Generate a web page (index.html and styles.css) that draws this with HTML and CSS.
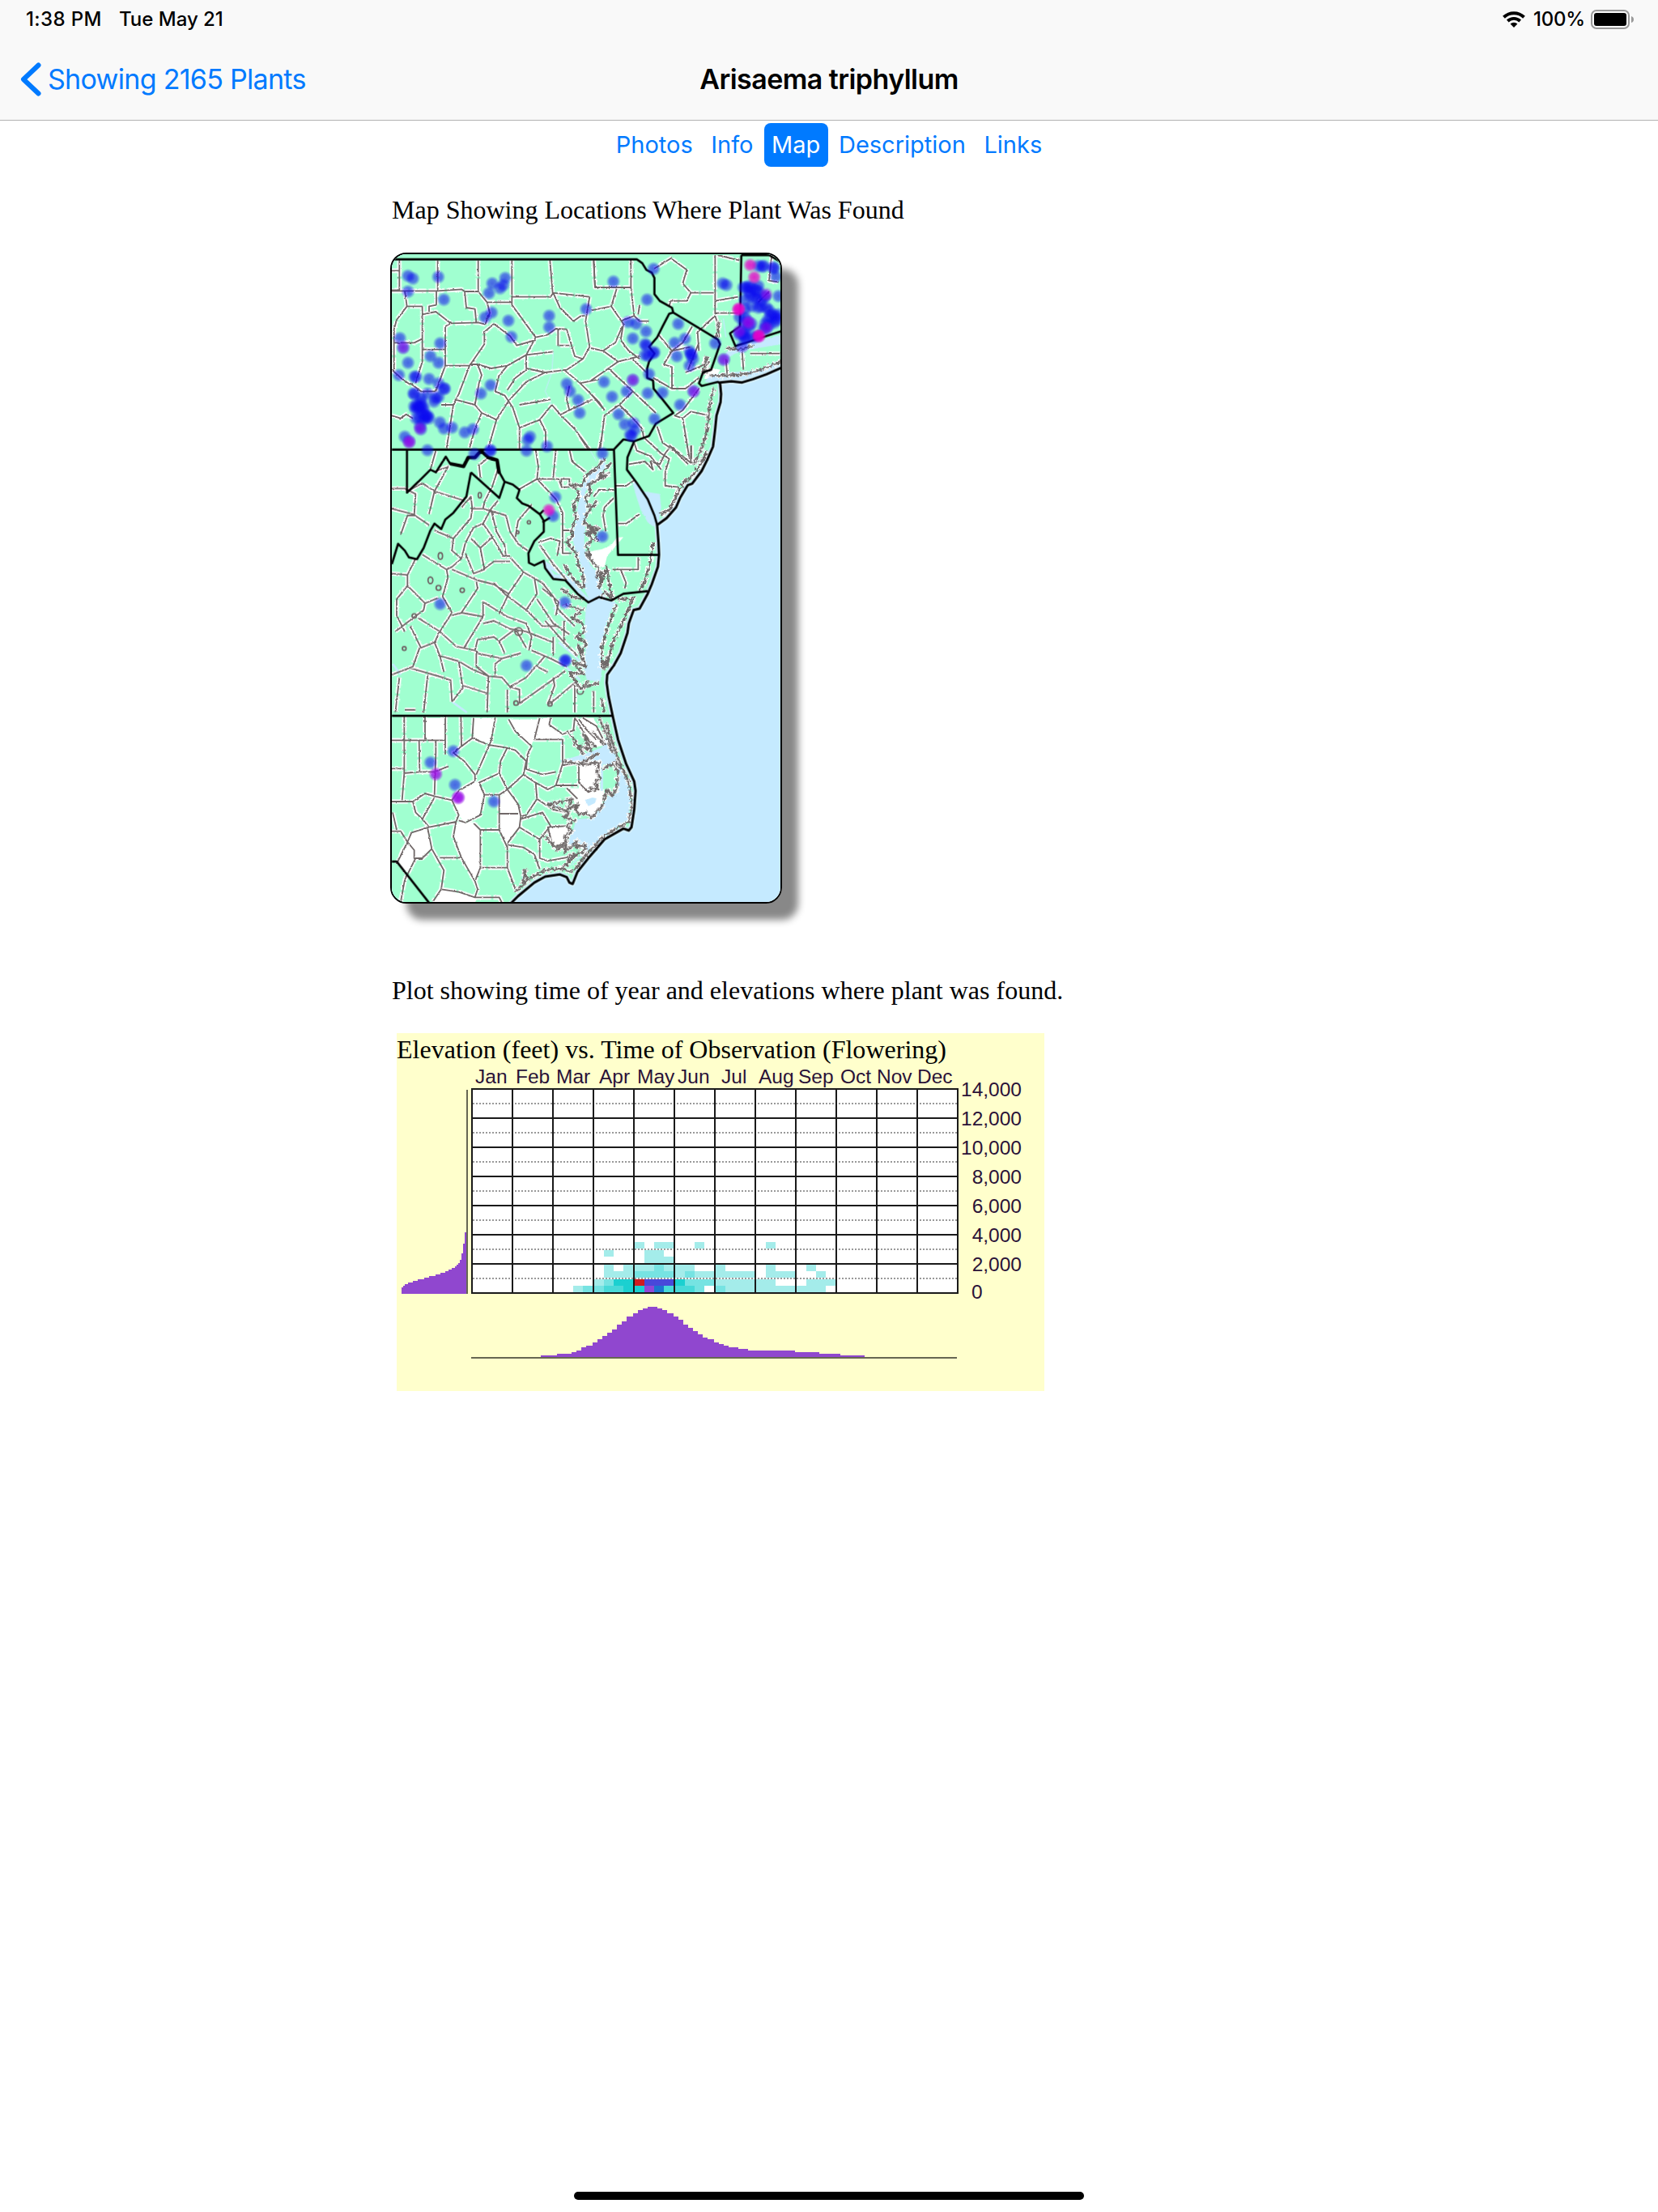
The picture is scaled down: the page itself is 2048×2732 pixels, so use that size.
FILE: index.html
```html
<!DOCTYPE html>
<html lang="en">
<head>
  <meta charset="UTF-8" />
  <meta name="viewport" content="width=device-width, initial-scale=1.0"/>
  <title>Arisaema triphyllum</title>
  <link rel="stylesheet" href="styles.css">
</head>
<body>
  <header>
    <div class="status-bar">
      <span class="time">1:38 PM</span>
      <span class="date">Tue May 21</span>
      <svg class="wifi" viewBox="0 0 28 20">
        <path d="M1.5 7.2A18 18 0 0 1 26.5 7.2" stroke-width="4"/>
        <path d="M6.3 12A11.2 11.2 0 0 1 21.7 12" stroke-width="3.8"/>
        <path class="tip" d="M14 20L9.6 15.6A6.4 6.4 0 0 1 18.4 15.6Z"/>
      </svg>
      <span class="percent">100%</span>
      <svg class="battery" viewBox="0 0 54 24">
        <rect x="1" y="1" width="46" height="22" rx="6" fill="none" stroke="#999" stroke-width="2"/>
        <rect x="4" y="4" width="40" height="16" rx="3"/>
        <path d="M50 8Q53 9 53 12T50 16Z" fill="#999"/>
      </svg>
    </div>
    <nav class="nav-bar">
      <a class="back" href="#">
        <svg viewBox="0 0 26 42"><path d="M22.5 3.5L4 21L22.5 38.5"/></svg>
        <span>Showing 2165 Plants</span>
      </a>
      <h1>Arisaema triphyllum</h1>
    </nav>
  </header>

  <div class="tabs">
    <a href="#">Photos</a>
    <a href="#">Info</a>
    <a href="#" class="active">Map</a>
    <a href="#">Description</a>
    <a href="#">Links</a>
  </div>

  <main>
    <p class="map-title">Map Showing Locations Where Plant Was Found</p>

    <svg class="map" viewBox="42 42 1440 2400">
      <defs>
        <filter id="rough" x="0" y="0" width="100%" height="100%">
          <feTurbulence type="fractalNoise" baseFrequency="0.09" numOctaves="2" seed="4"/>
          <feDisplacementMap in="SourceGraphic" scale="7" xChannelSelector="R" yChannelSelector="G"/>
        </filter>
        <filter id="rougher" x="-10%" y="-10%" width="120%" height="120%">
          <feTurbulence type="fractalNoise" baseFrequency="0.1" numOctaves="2" seed="9"/>
          <feDisplacementMap in="SourceGraphic" scale="20" xChannelSelector="R" yChannelSelector="G"/>
        </filter>
        <radialGradient id="blue">
          <stop offset="0" stop-color="#0a00f0" stop-opacity=".6"/>
          <stop offset=".55" stop-color="#0a0af0" stop-opacity=".52"/>
          <stop offset="1" stop-color="#0a0af0" stop-opacity="0"/>
        </radialGradient>
        <radialGradient id="purple">
          <stop offset="0" stop-color="#9a00e8" stop-opacity=".6"/>
          <stop offset=".55" stop-color="#9a10e8" stop-opacity=".5"/>
          <stop offset="1" stop-color="#9a20e8" stop-opacity="0"/>
        </radialGradient>
        <radialGradient id="pink">
          <stop offset="0" stop-color="#e800c8" stop-opacity=".85"/>
          <stop offset=".55" stop-color="#e800c8" stop-opacity=".7"/>
          <stop offset="1" stop-color="#e800c8" stop-opacity="0"/>
        </radialGradient>

        <path id="coast" d="M1500 456L1430 487L1380 505L1340 517L1300 513L1258 517L1262 560L1260 590L1245 640L1240 690L1232 755L1210 805L1190 845L1155 892L1138 898L1110 945L1095 980L1060 1020L1025 1045L1030 1110L1032 1155L1028 1200L1005 1265L990 1300L960 1355L938 1360L920 1410L915 1445L890 1520L865 1565L840 1600L838 1630L845 1680L862 1760L880 1840L910 1930L940 1995L945 2030L940 2100L930 2165L920 2177L900 2170L830 2210L770 2280L730 2330L712 2375L700 2370L690 2350L665 2340L610 2348L570 2370L510 2420L480 2450"/>

        <g id="counties">
          <!-- west and central Pennsylvania -->
          <path d="M70 65V175H42M42 103H70M212 65V180M362 65V180L395 220H487M487 65V230M487 200H630L640 185M628 65L638 185L775 200M790 65L795 165H928M42 178H210L300 172L312 180H362M207 180V230M90 178L98 235H155M98 235L60 285L50 320V470M155 235V440L130 520M155 265L205 255L260 298L362 295L388 302M312 180L318 240L350 245L355 295M180 255V235L207 230M155 395H240M260 298L240 310V455H330M50 370H125L155 355M42 470L75 500L110 525M240 455L205 550H150L110 520M330 455L385 375V330L420 300M330 455L290 560L270 600L245 760M420 300L480 345L505 380L575 360M395 220L405 260L388 302M487 230L575 350L620 340L650 318L690 320M575 350L540 415L470 455L410 465L360 450H330M540 415L640 403M540 415V465L610 480M360 450L375 490L365 520L350 600L275 580M470 455L440 490L425 550L460 565L490 610M540 470L500 500L470 545M610 480L540 515L475 585L430 655L400 760M610 480L690 470L750 430M690 320L720 420L750 430L775 385L760 290L775 200M658 320V380H700M640 185L665 240L715 290L740 272L755 270M350 600L375 630L350 690L330 760M375 630L430 655M490 610L515 685V765M515 685L590 655L635 600M515 600L630 580M590 655L612 700V765M635 600L670 640L720 690L775 765M680 470L740 520L810 590L830 620M740 520L810 505M670 635L700 620L785 580M700 530L690 580L700 620M225 600H270M42 640L75 650L95 635L120 650"/>
          <!-- east Pennsylvania, New Jersey, New York -->
          <path transform="translate(780 0)" d="M10 65L15 165M148 60V165L160 270M95 170L75 235L0 250M75 235L120 300L90 370L45 400L0 390M160 270L110 290M175 265L180 230M160 270L180 290H215M120 300L110 360L140 400L180 430M45 400L100 440L180 420M100 440L65 465L0 510M65 465L155 550L240 630M155 430L205 480M155 550L105 600L50 640L35 760M0 560L50 620M105 600L165 660L190 690L195 720M300 55L235 95M300 60L355 100L340 150L370 185H455M370 185L355 215H295L290 235M460 45V260H545M460 215L545 200M460 270L395 330L400 400M460 270L470 300L475 350M375 310L340 370L300 400M400 370L360 470M250 340L300 400L270 450L300 460V540H350L400 500M300 400L370 385M350 480L400 460L440 440M230 500L300 540M400 540L340 620L310 640L340 650L365 800M340 650L370 625L440 640M245 680L265 740L310 770L360 820M160 740L170 770L220 790L260 840M670 45L660 140L695 145M560 400L565 470M500 430L505 490M660 180L620 220M470 45L550 65M425 430L435 445L420 460M590 410H700M372 750V800"/>
          <!-- south New Jersey, Maryland, Delaware -->
          <path transform="translate(510 720)" d="M410 100L470 90L500 120L490 90L525 100L545 60L560 40M470 5L530 60L560 80L545 130V180L595 185M560 30L640 95L700 80M640 30V95M595 185L570 260L530 290M360 180H400L430 160M370 320H400L450 285M340 130L300 155L270 165M280 220L300 195H355M355 225L320 260L315 290L325 350M445 445V490H350M380 490L400 540L395 560M140 45L130 150M190 45L200 90L250 130M65 45L75 110L70 155L0 195M70 155H150L160 180M70 155L140 230L165 280V430H200M165 345H200M75 390L120 375L155 385L145 440M230 0L260 45M310 0L300 45M160 155H190V185H160Z"/>
          <!-- Virginia -->
          <path transform="translate(0 720)" d="M205 50L185 120M205 125L250 110L200 200L155 170M200 200L180 285M200 200L310 235M42 190H90L130 210L125 290H100L75 360M42 265L120 285L180 325M155 170L100 200M365 100L370 150M370 100L400 75M435 120L415 180L385 240L380 265H340L335 220L300 260M340 265L335 300L300 340L270 375L265 420L300 450M200 345L270 375M435 235L410 265L380 320L345 335L315 390L300 450M380 320L415 370L370 410L335 375M380 265L465 290M410 270L430 350L460 400L465 445M465 290L480 350L510 395L545 420M370 410L385 490L345 505L315 430M415 370L455 440H480M480 460H420L380 490M155 435L245 490L250 520M245 490L265 480L300 450M265 490L360 530L420 545L475 580L530 500L480 445M250 520L230 590L265 650M100 550V510L42 505M130 450L100 510M100 550L165 615L160 640L55 720M100 550L60 600V660L90 720M165 615L215 595M265 650L220 720L140 670M265 660L300 650L360 560L355 535M300 650L380 665V610L470 665L540 690M475 580L440 655M420 540L460 580L540 640L600 700H660M220 720L280 775L350 790L360 750L420 740L440 755M380 665L310 780M380 690L420 680L480 710L540 720L640 760M540 640L580 580L570 520M530 500L600 540L640 590L660 640L720 700M220 720L200 760L150 780L110 700M200 760L220 810L290 830L340 860L400 885M145 780L120 850L42 880M110 855L230 890L260 900L265 980M290 830L305 930L265 980M220 810L235 870M70 890L55 1020M175 880L160 1020M305 920L400 950M355 790V850L400 885L450 890L480 925M400 885L395 1020M355 800L450 820L520 800M450 820L425 840V880M440 755L460 800M440 755L500 710L540 780M480 925L540 890L610 810M480 925L515 935V990M510 990L685 865M470 935V1020M580 850L620 870M640 890L645 920L620 990M625 990L720 910V1020M560 790L630 820L690 850M600 560L660 610L650 660M540 690L560 740L550 790M580 600L640 690L700 730M610 680L680 760L730 810M560 250L510 310L500 370M590 400L640 470L690 530M90 1010H130M640 740L640 810M680 680V760M790 940V1020"/>
          <!-- North Carolina -->
          <path transform="translate(0 1680)" d="M88 75V285L80 385M165 75V160M240 75V215M298 75L300 185M42 163H240M143 165L145 280L85 285M205 165V210L200 365M42 268H85M145 280H200L250 260M300 185L270 210L310 240L350 290V315M345 80L340 155L400 180L465 190M300 185L340 155M425 80L410 165L355 290M470 190L445 240L440 285L365 320L385 365H440L470 345L530 290L540 240L500 200L465 190M440 285L470 345M475 85L500 130L560 185L545 215L540 270L600 290L650 280M590 80L570 160H675V250L650 330M630 80L625 105L675 140L720 125M720 80L715 125M735 85L760 120L800 160M675 255L735 245M530 290L575 320L620 345L650 330H730M575 320L580 380L540 440L520 445L510 400L470 345M42 390H120L165 360L200 370L265 385M350 315L290 350L265 385L290 440L280 465L180 485L155 455L200 375M120 390L130 430L155 455M180 485L115 505L100 540L75 500H42M45 430L60 495M100 540L125 570V600H155L190 565L175 490M100 540L70 600L60 620M130 600L90 680L75 760M190 565L235 645L225 715L195 760M220 598H300L350 685L370 635M280 465L270 520L300 598M385 365L370 440L315 468L290 460M345 470L370 495V635H470V560L440 495H370M440 365V495M440 435H510M520 445L515 485L470 545M515 485L590 530V600L620 610L730 590M470 550L530 560L570 585L590 640M520 455L600 430L630 480L590 530M580 380L640 420L690 430M470 635L500 715M350 685L360 715L350 745L290 725L225 715M350 745H440L450 765M690 340L730 380M620 485L700 480L690 540L640 560ZM720 80L790 190M750 80L800 110L835 180M735 250L810 245L805 340L770 355L735 320Z"/>
        </g>

        <g id="shores">
          <path transform="translate(510 720)" d="M320 80L290 115L255 140L235 180L190 175L225 200L222 230L205 245L215 300L200 340L200 370L180 390L215 430L225 480L240 500L245 560M170 470L200 520L240 560M345 95L300 145L330 140L260 175L270 210L250 220L260 260L290 240L250 290L245 320L300 340L250 355L280 380L250 400L270 440L250 430L290 480M255 330L285 350L260 360L275 335L295 385M300 480L290 520L310 500L300 560L330 480L335 530L350 600L320 570L305 600M160 560L200 590L240 600M170 620L240 640L200 670L240 690L245 720L215 740L250 760L240 800L220 770L250 850L200 830L245 880L190 870L230 930L260 905M230 930L300 910M365 620L330 710L310 780V850L330 820L320 860"/>
          <path transform="translate(510 720)" d="M700 50L680 95L640 150L620 160L590 210L560 270L525 285M500 390L490 460L470 530L450 570M430 590L390 680L350 760L330 850M310 970L320 1020M370 600L420 600"/>
          <path transform="translate(450 1680)" d="M240 130L260 150L300 210L270 175L330 200L300 140L350 190M335 130L380 180M230 240L290 250L360 210M295 255L360 245L350 280L365 300L345 320L355 345L320 340M370 270L410 250L430 280L425 340L410 370L390 345L370 410L330 450L310 430L290 440L270 420L285 400L240 420L260 380L220 390L170 400L250 430L230 450L270 460L240 480L260 500L230 520L240 540L200 560L150 510M200 570L240 550L230 580L280 535L275 560L310 550L300 580L250 590L240 630M80 640L95 680L75 690L90 640"/>
          <path transform="translate(450 1680)" d="M360 80L390 150L410 210M385 100L430 230L470 320L482 400L470 465L430 485L370 525L310 590L270 640L255 650L215 638L160 645L110 670L50 725M270 590L220 640M420 240L460 290"/>
          <path transform="translate(780 0)" d="M705 440L640 465L580 485L500 492L440 490M430 420L415 480L445 470M475 290L465 350M455 540L440 600L430 700L410 760L380 820M500 390L560 395L600 380"/>
        </g>
      </defs>

      <rect class="water" x="0" y="0" width="1500" height="2500"/>
      <use href="#coast" class="coast-glow"/>
      <path class="land" d="M1500 456L1430 487L1380 505L1340 517L1300 513L1258 517L1262 560L1260 590L1245 640L1240 690L1232 755L1210 805L1190 845L1155 892L1138 898L1110 945L1095 980L1060 1020L1025 1045L1030 1110L1032 1155L1028 1200L1005 1265L990 1300L960 1355L938 1360L920 1410L915 1445L890 1520L865 1565L840 1600L838 1630L845 1680L862 1760L880 1840L910 1930L940 1995L945 2030L940 2100L930 2165L920 2177L900 2170L830 2210L770 2280L730 2330L712 2375L700 2370L690 2350L665 2340L610 2348L570 2370L510 2420L480 2450H30V30H1500Z"/>

      <!-- counties without a record -->
      <g class="blank" filter="url(#rough)">
        <path d="M900 1090L875 1092L855 1120L820 1135L790 1140L765 1150L780 1190L805 1205L830 1200L840 1160L875 1120Z"/>
        <path transform="translate(0 1680)" d="M165 80H240V160H168ZM345 80H420L410 165L390 175L345 155ZM475 85H590L570 160L555 185L500 130ZM590 80H630L625 105L675 140L670 160H570ZM350 310L380 345L375 430L310 468L290 440L265 385L290 350ZM285 470L350 465L370 500L365 640L350 680L300 600L270 540ZM60 610L75 565L100 540L125 570L125 610L90 660ZM110 510L150 490L175 500L188 565L150 600H125V570L100 540ZM445 375L470 345L510 400V430L445 435ZM445 440L515 430L510 490L470 540L440 500ZM190 765L230 715L360 745L350 765ZM620 490L700 480L690 540L640 560ZM720 80H790L835 180L790 190ZM735 255L810 245L805 340L830 345L820 410L780 450L730 430L700 340H735Z"/>
        <path d="M1210 460L1260 470L1240 500L1200 505ZM1195 420L1215 435L1195 460Z"/>
      </g>

      <g class="water" filter="url(#rough)">
        <!-- Long Island Sound -->
        <path d="M1280 405L1315 385L1485 340V375L1350 398L1310 412L1280 430Z"/>
        <path d="M1485 430L1400 472L1280 480L1225 490L1200 515L1260 517L1340 517L1485 462Z"/>
        <!-- Delaware Bay -->
        <path d="M925 855L950 890L970 920L1035 930L1040 980L1030 1045L1010 1050L990 1035L965 990L948 940Z"/>
        <!-- Chesapeake Bay -->
        <path transform="translate(510 720)" d="M320 80L290 115L260 140L235 180L225 230L215 300L200 370L215 430L235 480L245 560L262 600L250 640L245 720L250 800L240 850L255 900L305 905L310 860V780L325 700L345 640L365 615L330 600L305 560L295 500L270 480L250 430L245 380L250 320L255 260L250 200L290 150L325 110Z"/>
        <!-- Albemarle and Pamlico sounds -->
        <path transform="translate(450 1680)" d="M230 235L300 215L370 190L385 150L410 180L430 240L465 310L478 360L470 460L380 515L300 590L240 640L310 570L280 550L240 560L200 565L240 545L262 500L275 455L330 452L370 410L390 370L410 370L427 350V260L365 250L360 240L290 248L230 255Z"/>
        <path d="M758 2065L785 2055L800 2058L795 2075L770 2087Z"/>
      </g>
      <g class="river">
        <path d="M640 403L635 480L610 550L635 600L720 690L775 765L800 810" stroke-width="3"/>
        <path d="M605 1185L640 1235L690 1240L740 1295L770 1325M600 1180L660 1220L730 1270" stroke-width="14"/>
        <path d="M640 1350L680 1390L720 1420M660 1480L720 1530L745 1560M685 1570L740 1620M420 1260L465 1300M265 1700L320 1740M45 1560L75 1600" stroke-width="8"/>
        <path d="M620 2070L700 2115M620 2210L650 2245M672 1830V1920L740 1920M820 1920V2030M530 2320V2360" stroke-width="9"/>
        <path d="M1242 50V290M1270 280L1280 350" stroke-width="4"/>
      </g>

      <use href="#counties" class="county-edge" filter="url(#rough)"/>
      <use href="#counties" class="county-line" filter="url(#rough)"/>
      <g class="county-line">
        <ellipse cx="368" cy="935" rx="6" ry="10"/>
        <circle cx="550" cy="1035" r="6"/>
        <ellipse cx="222" cy="1160" rx="8" ry="12"/>
        <ellipse cx="185" cy="1250" rx="9" ry="12"/>
        <circle cx="215" cy="1278" r="9"/>
        <circle cx="303" cy="1287" r="8"/>
        <circle cx="125" cy="1382" r="8"/>
        <circle cx="88" cy="1503" r="7"/>
        <circle cx="508" cy="1072" r="5"/>
        <circle cx="502" cy="1705" r="8"/>
        <circle cx="628" cy="1708" r="8"/>
        <circle cx="740" cy="1660" r="12"/>
        <circle cx="512" cy="1440" r="14"/>
      </g>

      <use href="#coast" class="coast-water"/>
      <use href="#shores" class="shore-edge" filter="url(#rougher)"/>
      <use href="#shores" class="shore-line" filter="url(#rougher)"/>

      <!-- state lines -->
      <g class="state-line">
        <path d="M42 61H950L970 75L985 100L1005 110L1015 130V190L1035 215L1080 240L1085 258L1250 358L1258 375L1225 470L1195 480L1180 520L1190 530L1250 515L1258 520"/>
        <path d="M1085 258L1070 262L1045 310L1025 350L995 385L1015 410L995 440L988 465V500L1010 510L1012 540L1045 580L1085 630L1020 670L995 715L940 735L900 728L865 765"/>
        <path d="M42 766H865L880 1156H1032M940 735L915 795L913 840L950 890L990 950L1015 1010L1025 1045"/>
        <path d="M1337 45L1332 310L1295 335L1315 382L1500 322M1337 45H1440L1500 80"/>
        <path d="M98 770V925L140 885L185 840L205 850L242 792L258 818L308 828L325 795H350L372 770L400 795L432 805L435 840L460 885L490 895L515 915L505 945L525 965L550 975L590 1005L605 1030V1070L570 1105L548 1150L550 1185L570 1195L605 1178L610 1205L640 1245L685 1250L730 1300L770 1332L810 1312L855 1325L900 1300L990 1290"/>
        <path d="M335 850L440 945L460 885M335 850L318 940L270 1000L240 1025L225 1060L200 1040L185 1065L160 1130L135 1172L105 1165L90 1140L65 1115L42 1190M590 1005L605 990M600 1035L628 1018"/>
        <path d="M42 1752H862M42 2292H60L180 2445"/>
        <path class="thick" d="M258 818L308 828L325 795H350L372 770L400 795L432 805L440 855"/>
      </g>
      <use href="#coast" class="coast-line"/>

      <g id="dots"></g>
    </svg>

    <p class="plot-title">Plot showing time of year and elevations where plant was found.</p>

    <svg class="plot" viewBox="490 1276 800 442">
      <text class="caption" x="490" y="1307" textLength="679">Elevation (feet) vs. Time of Observation (Flowering)</text>
      <rect x="583" y="1345" width="600" height="252" fill="#fff"/>
      <g id="cells" shape-rendering="crispEdges"></g>
      <g id="grid"></g>
      <g id="labels"></g>
      <g shape-rendering="crispEdges">
        <path class="histogram" transform="translate(470 1190) scale(.33333 .34439)" d="M318 1185V964H312V1005H306V1040H300V1063H294V1074H288V1080H282V1086H276V1092H264V1098H252V1103H240V1109H222V1115H204V1121H180V1127H162V1132H138V1138H120V1144H102V1150H90V1156H84V1161H78V1185Z"/>
        <path class="histogram" transform="translate(680 1480) scale(.33333)" d="M-36 588V582H24V576H78V570H96V564H114V552H132V546H156V534H174V522H192V510H210V498H228V486H246V468H264V456H282V438H306V426H324V414H342V408H360V402H396V408H414V414H432V426H456V438H474V450H492V468H510V480H528V492H546V504H564V516H582V522H606V534H624V540H642V546H660V552H696V558H732V564H906V570H996V576H1074V582H1164V588Z"/>
        <path class="axis" d="M577 1346V1598M582 1677H1182"/>
      </g>
    </svg>
  </main>

  <div class="home-indicator"></div>

  <script>
    const svgNS = 'http://www.w3.org/2000/svg';

    function add(parent, name, attrs, text) {
      const el = document.createElementNS(svgNS, name);
      for (const key in attrs) el.setAttribute(key, attrs[key]);
      if (text) el.textContent = text;
      parent.appendChild(el);
    }

    // --- Observations on the map: x, y ---
    const dots = {
      blue: [
        [102,122],[120,132],[102,180],[214,126],[235,210],[414,150],[462,130],[455,156],[443,168],[402,186],[412,258],[388,276],[474,288],[485,348],
        [625,270],[625,312],[762,245],[72,353],[84,388],[221,372],[185,420],[215,444],[102,444],[68,490],[126,496],[132,496],
        [180,504],[215,520],[235,540],[238,540],[122,558],[126,560],[174,558],[205,575],[198,588],[215,570],[150,576],[135,600],[145,610],
        [140,612],[155,605],[130,615],[165,640],[170,645],[175,640],[145,650],[155,630],[160,655],[180,650],[132,650],[146,680],
        [150,690],[90,718],[106,735],[150,590],[125,605],[160,615],[220,665],[235,688],[265,684],[312,702],[343,690],[372,558],[408,527],[408,768],
        [406,770],[348,782],[174,768],[545,730],[554,718],[541,770],[617,754],[690,522],[702,550],[732,582],[738,630],
        [1012,96],[863,143],[988,210],[918,293],[948,300],[984,328],[935,354],[980,375],[985,380],[1015,405],[1010,408],
        [980,415],[992,418],[995,486],[828,515],[935,508],[858,570],[912,550],[990,557],[1045,555],[882,635],[905,672],[938,668],
        [942,693],[930,715],[925,710],[1015,652],[1103,300],[1090,370],[1128,355],[1098,420],[1145,400],[1152,412],[1150,415],
        [1145,455],[1158,430],[1240,372],[1160,550],[1110,600],[1268,150],[1282,156],[822,780],[1272,432],
        [1400,85],[1415,88],[1455,90],[1458,95],[1465,125],[1475,197],[1355,165],[1365,160],[1390,175],[1400,180],[1370,195],
        [1385,200],[1425,195],[1350,245],[1375,235],[1410,235],[1430,240],[1455,265],[1468,285],[1460,295],[1440,305],[1350,275],
        [1360,290],[1375,300],[1330,330],[1345,340],[1355,350],[1340,385],[1420,320],[1430,315],[1395,345],[1475,265],[1380,350],
        [1350,210],[1410,215],[1440,250],[1345,165],[1420,85],[1365,310],[1365,180],[1400,160],[1395,205],[1435,285],[1465,275],
        [1350,325],[1425,200],[1330,340],[1425,300],[1350,355],[1400,240],[1375,165],[1345,300],[1330,275],[1445,270],
        [648,942],[640,1012],[822,1088],[683,1332],[221,1338],[683,1548],[686,1546],[541,1566],
        [185,1925],[270,1883],[276,2008],[420,2070]
      ],
      purple: [
        [106,738],[106,738],[146,688],[935,508],[1160,550],[1272,432],[1367,295],[1430,315],[1330,328],[205,1968],
        [205,1968],[288,2055],[288,2055],[288,2055],[1430,190],[1360,295],[84,388]
      ],
      pink: [[1370,82],[1385,127],[1328,244],[1402,345],[1402,345],[624,990],[1326,247]]
    };
    const dotGroup = document.getElementById('dots');
    for (const color in dots) {
      dots[color].forEach(([x, y]) => add(dotGroup, 'circle', { cx: x, cy: y, r: 27, fill: `url(#${color})` }));
    }

    // --- Density cells, four per month, lowest elevation first ---
    const colors = {
      A: '#a4ecea', B: '#76e3e2', C: '#48d9d8', D: '#1bd0d0',
      R: '#d01b20', P: '#4848da', V: '#9047d8', T: '#1b75d0'
    };
    const rows = [
      [1588, '..........ABBCCDDVTCCCB.BAAAAAAAAAA.'],
      [1580, '............ABDDRPPPDBBBAAAAAA...AAA'],
      [1570, '.............AAABBBBABAAAAAA.AAA..A.'],
      [1562, '.............A.AAABAAA..A....A...A..'],
      [1552, '.................AAA'],
      [1544, '.............A...AA.'],
      [1534, '................A.AA..A......A..']
    ];
    const cells = document.getElementById('cells');
    rows.forEach(([y, row]) => {
      [...row].forEach((c, i) => {
        if (c === '.') return;
        add(cells, 'rect', { x: 584 + Math.floor(i / 4) * 50 + (i % 4) * 12, y: y, width: 12, height: 8, fill: colors[c] });
      });
    });

    // --- Grid lines and labels ---
    const grid = document.getElementById('grid');
    const labels = document.getElementById('labels');
    for (let i = 0; i < 7; i++) {
      add(grid, 'path', { class: 'dotted', d: `M584 ${1363 + i * 36}H1182` });
    }
    for (let i = 0; i <= 7; i++) {
      add(grid, 'path', { class: 'line', d: `M582 ${1345 + i * 36}H1184` });
    }
    for (let i = 0; i <= 12; i++) {
      add(grid, 'path', { class: 'line', d: `M${583 + i * 50} 1344V1598` });
    }
    const months = [
      ['Jan', 587], ['Feb', 637], ['Mar', 687], ['Apr', 740], ['May', 787], ['Jun', 837],
      ['Jul', 891], ['Aug', 937], ['Sep', 986], ['Oct', 1038], ['Nov', 1083], ['Dec', 1133]
    ];
    months.forEach(([name, x]) => add(labels, 'text', { x: x, y: 1337.5 }, name));
    ['14,000', '12,000', '10,000', '8,000', '6,000', '4,000', '2,000'].forEach((text, i) => {
      add(labels, 'text', { x: 1262, y: 1353.5 + i * 36, 'text-anchor': 'end' }, text);
    });
    add(labels, 'text', { x: 1200, y: 1603.5 }, '0');
  </script>
</body>
</html>
```
FILE: styles.css
```css
body {
  margin: 0;
  min-height: 2732px;
  position: relative;
  background-color: #fff;
  color: #000;
  font-family: 'Inter', 'Liberation Sans', sans-serif;
}

a {
  color: #007aff;
  text-decoration: none;
}

header {
  background-color: #f9f9f9;
  border-bottom: 1px solid #b2b2b2;
}

.status-bar {
  display: flex;
  align-items: center;
  height: 47px;
  padding: 0 29px 1px 32px;
  font-size: 24px;
  font-weight: 500;
}

.time {
  letter-spacing: 0.4px;
}

.date {
  margin-left: 21px;
}

.wifi {
  width: 28px;
  height: 20px;
  margin-left: auto;
  fill: none;
  stroke: #000;
}

.wifi .tip {
  fill: #000;
  stroke: none;
}

.percent {
  margin: 0 7px 0 10px;
  letter-spacing: -0.2px;
}

.battery {
  width: 54px;
  height: 24px;
}

.nav-bar {
  display: grid;
  grid-template-columns: 1fr auto 1fr;
  align-items: center;
  height: 99px;
  padding: 0 25px 1px;
  font-size: 34px;
}

.back {
  display: flex;
  align-items: center;
  gap: 8px;
  letter-spacing: -0.7px;
}

.back svg {
  width: 26px;
  height: 42px;
  fill: none;
  stroke: #007aff;
  stroke-width: 6;
  stroke-linecap: round;
  stroke-linejoin: round;
}

h1 {
  margin: 0;
  font-size: 34px;
  font-weight: 600;
  letter-spacing: -0.55px;
}

.tabs {
  display: flex;
  justify-content: center;
  gap: 4px;
  margin-top: 3px;
  font-size: 29px;
}

.tabs a {
  padding: 0 9.3px;
  line-height: 54px;
  border-radius: 8px;
}

.tabs .active {
  background-color: #007aff;
  color: #fff;
}

main {
  margin-left: 482px;
  font-family: 'Liberation Serif', serif;
  font-size: 32px;
}

main p {
  margin: 0 0 0 2px;
  line-height: 36px;
}

.map-title {
  padding-top: 35px;
}

.map {
  display: block;
  width: 480px;
  height: 800px;
  margin-top: 35px;
  border: 2px solid #000;
  border-radius: 20px;
  box-shadow: 20px 20px 10px #888;
}

.plot-title {
  padding-top: 89px;
}

.plot {
  display: block;
  width: 800px;
  height: 442px;
  margin: 35px 0 0 8px;
  background-color: #ffffcc;
}

/* map layers */
.water {
  fill: #c5eaff;
}

.land {
  fill: #a0ffd0;
}

.blank {
  fill: #fff;
}

.river {
  fill: none;
  stroke: #c5eaff;
}

.county-edge,
.county-line,
.shore-edge,
.shore-line,
.state-line,
.coast-line,
.coast-water,
.coast-glow {
  fill: none;
  stroke-linejoin: round;
}

.county-edge {
  stroke: #fff;
  stroke-width: 16;
  stroke-dasharray: 60 8;
}

.county-line {
  stroke: #706868;
  stroke-width: 5.5;
}

.shore-edge {
  stroke: #fff;
  stroke-width: 18;
  stroke-dasharray: 30 14;
}

.shore-line {
  stroke: #6e6868;
  stroke-width: 8;
}

.state-line {
  stroke: #000;
  stroke-width: 8;
}

.state-line .thick {
  stroke-width: 13;
}

.coast-glow {
  stroke: #e4f6ff;
  stroke-width: 18;
}

.coast-water {
  stroke: #d4f0fb;
  stroke-width: 20;
}

.coast-line {
  stroke: #000;
  stroke-width: 9;
}

/* elevation plot */
.caption {
  font-size: 32px;
}

#labels {
  font-family: 'Liberation Sans', sans-serif;
  font-size: 24.5px;
  fill: #2a1238;
}

#grid .line {
  stroke: #1a1a1a;
  stroke-width: 2;
}

#grid .dotted {
  stroke: #999;
  stroke-width: 2;
  stroke-dasharray: 2 2;
}

.histogram {
  fill: #9047cf;
}

.axis {
  stroke: #666652;
  stroke-width: 2;
}

.home-indicator {
  position: absolute;
  left: 709px;
  bottom: 15px;
  width: 630px;
  height: 10px;
  border-radius: 5px;
  background-color: #000;
}
```
